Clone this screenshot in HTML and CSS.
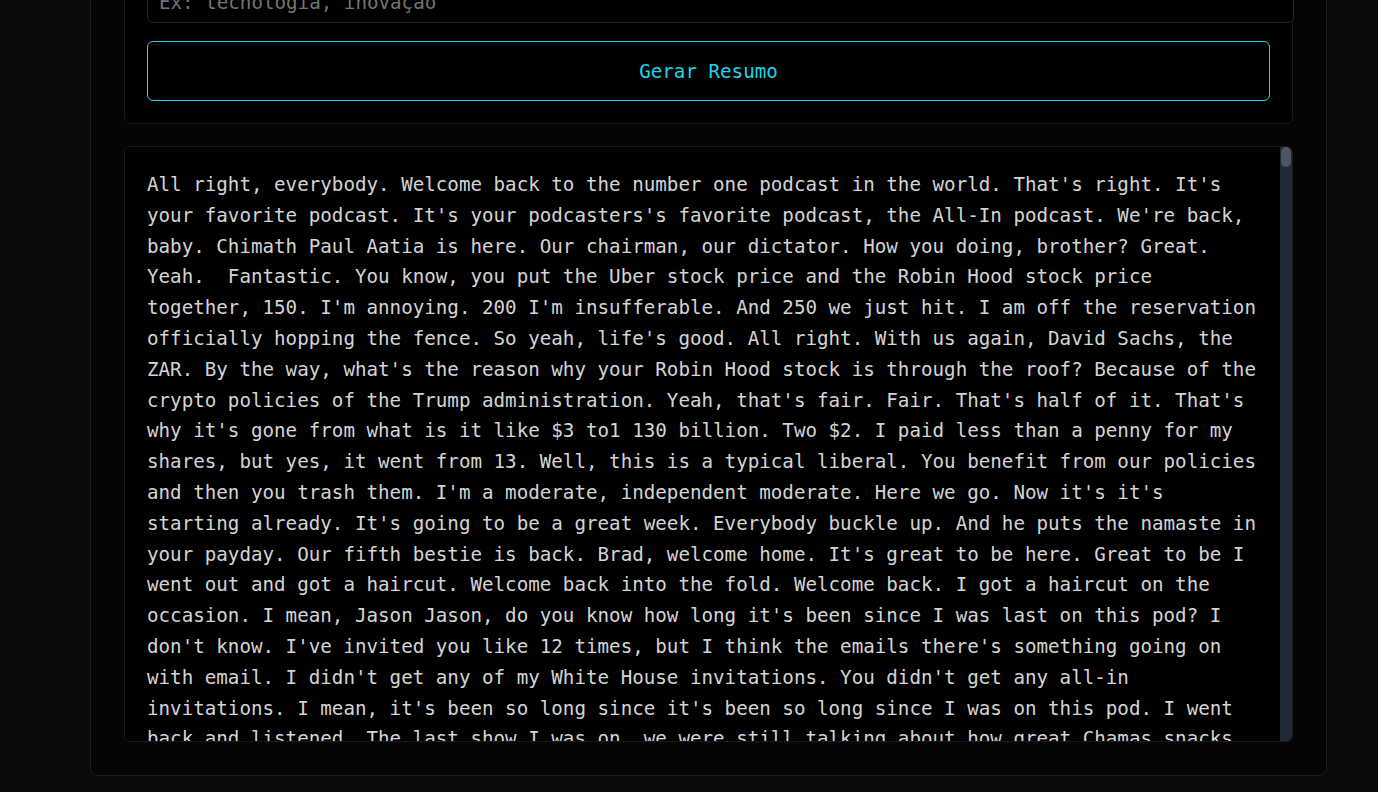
FILE: index.html
```html
<!DOCTYPE html>
<html lang="pt-BR">
<head>
<meta charset="utf-8">
<title>Resumo</title>
<link rel="stylesheet" href="styles.css">
</head>
<body>
<main class="panel">
  <form class="card" onsubmit="return false">
    <input class="field" type="text" placeholder="Ex: tecnologia, inovação">
    <button class="btn" type="submit">Gerar Resumo</button>
  </form>
  <section class="result">
    <div class="transcript">All right, everybody. Welcome back to the number one podcast in the world. That's right. It's your favorite podcast. It's your podcasters's favorite podcast, the All-In podcast. We're back, baby. Chimath Paul Aatia is here. Our chairman, our dictator. How you doing, brother? Great. Yeah.  Fantastic. You know, you put the Uber stock price and the Robin Hood stock price together, 150. I'm annoying. 200 I'm insufferable. And 250 we just hit. I am off the reservation officially hopping the fence. So yeah, life's good. All right. With us again, David Sachs, the ZAR. By the way, what's the reason why your Robin Hood stock is through the roof? Because of the crypto policies of the Trump administration. Yeah, that's fair. Fair. That's half of it. That's why it's gone from what is it like $3 to1 130 billion. Two $2. I paid less than a penny for my shares, but yes, it went from 13. Well, this is a typical liberal. You benefit from our policies and then you trash them. I'm a moderate, independent moderate. Here we go. Now it's it's starting already. It's going to be a great week. Everybody buckle up. And he puts the namaste in your payday. Our fifth bestie is back. Brad, welcome home. It's great to be here. Great to be I went out and got a haircut. Welcome back into the fold. Welcome back. I got a haircut on the occasion. I mean, Jason Jason, do you know how long it's been since I was last on this pod? I don't know. I've invited you like 12 times, but I think the emails there's something going on with email. I didn't get any of my White House invitations. You didn't get any all-in invitations. I mean, it's been so long since it's been so long since I was on this pod. I went back and listened. The last show I was on, we were still talking about how great Chamas snacks were.</div>
    <div class="scrollbar"><div class="thumb"></div></div>
  </section>
</main>
</body>
</html>
```

FILE: styles.css
```css
* {
  box-sizing: border-box;
}

html, body {
  margin: 0;
  padding: 0;
  background: #0a0a0a;
  overflow: hidden;
}

body {
  font-family: "DejaVu Sans Mono", "Liberation Mono", monospace;
  font-size: 19.2px;
  color: #d4d4d4;
}

.panel {
  width: 1237px;
  margin: -82px 0 0 90px;
  padding: 33px;
  background: #050505;
  border: 1px solid #1c1c1c;
  border-radius: 8px;
  display: flex;
  flex-direction: column;
  gap: 22px;
}

.card {
  margin: 0;
  padding: 22px;
  background: #000;
  border: 1px solid #1a1a1a;
  border-radius: 6px;
  display: flex;
  flex-direction: column;
  gap: 18px;
}

.field {
  box-sizing: content-box;
  width: 100%;
  height: 22px;
  padding: 15px 11px 9px;
  margin: 0;
  background: #000;
  border: 1px solid #262626;
  border-radius: 6px;
  color: #d4d4d4;
  font: inherit;
  outline: none;
}

.field::placeholder {
  color: #747474;
}

.btn {
  height: 60px;
  margin: 0;
  padding: 0;
  background: #000;
  border: 1px solid #22d3ee;
  border-radius: 6px;
  color: #22d3ee;
  font: inherit;
  cursor: pointer;
}

.result {
  height: 596px;
  background: #000;
  border: 1px solid #1a1a1a;
  border-radius: 6px;
  display: flex;
  overflow: hidden;
}

.transcript {
  flex: 1;
  min-width: 0;
  padding: 23px 22px 22px;
  overflow: hidden;
  white-space: pre-wrap;
  line-height: 30.8px;
  color: #d4d4d4;
}

.scrollbar {
  width: 12px;
  flex: none;
  background: #1f2937;
  padding: 0 1px;
}

.thumb {
  height: 20px;
  background: #4b5563;
  border-radius: 6px;
}
```
